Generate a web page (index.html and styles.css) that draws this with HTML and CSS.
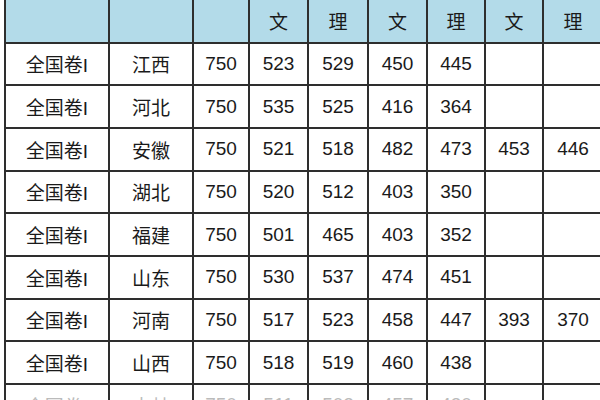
FILE: index.html
```html
<!DOCTYPE html>
<html lang="zh">
<head>
<meta charset="utf-8">
<link rel="stylesheet" href="styles.css">
</head>
<body>
<table class="score">
  <colgroup>
    <col class="c1"><col class="c2"><col class="c3"><col class="c4"><col class="c5"><col class="c6"><col class="c7"><col class="c8"><col class="c9">
  </colgroup>
  <thead>
    <tr class="head"><th></th><th></th><th></th><th>文</th><th>理</th><th>文</th><th>理</th><th>文</th><th>理</th></tr>
  </thead>
  <tbody>
    <tr><td>全国卷I</td><td>江西</td><td>750</td><td>523</td><td>529</td><td>450</td><td>445</td><td></td><td></td></tr>
    <tr><td>全国卷I</td><td>河北</td><td>750</td><td>535</td><td>525</td><td>416</td><td>364</td><td></td><td></td></tr>
    <tr><td>全国卷I</td><td>安徽</td><td>750</td><td>521</td><td>518</td><td>482</td><td>473</td><td>453</td><td>446</td></tr>
    <tr><td>全国卷I</td><td>湖北</td><td>750</td><td>520</td><td>512</td><td>403</td><td>350</td><td></td><td></td></tr>
    <tr><td>全国卷I</td><td>福建</td><td>750</td><td>501</td><td>465</td><td>403</td><td>352</td><td></td><td></td></tr>
    <tr><td>全国卷I</td><td>山东</td><td>750</td><td>530</td><td>537</td><td>474</td><td>451</td><td></td><td></td></tr>
    <tr><td>全国卷I</td><td>河南</td><td>750</td><td>517</td><td>523</td><td>458</td><td>447</td><td>393</td><td>370</td></tr>
    <tr><td>全国卷I</td><td>山西</td><td>750</td><td>518</td><td>519</td><td>460</td><td>438</td><td></td><td></td></tr>
    <tr class="faded"><td>全国卷I</td><td>吉林</td><td>750</td><td>511</td><td>502</td><td>457</td><td>430</td><td></td><td></td></tr>
  </tbody>
</table>
</body>
</html>
```
FILE: styles.css
```css
html, body {
  margin: 0;
  padding: 0;
  background: #ffffff;
  overflow: hidden;
}
.score {
  border-collapse: collapse;
  table-layout: fixed;
  width: 598px;
  margin-left: 4px;
  margin-top: -1px;
  font-family: "Liberation Sans", "Noto Sans CJK SC", sans-serif;
  font-size: 19px;
  color: #1a1a1a;
}
.c1 { width: 104px; }
.c2 { width: 84px; }
.c3 { width: 56px; }
.c4 { width: 59px; }
.c5 { width: 60px; }
.c6 { width: 59px; }
.c7 { width: 58px; }
.c8 { width: 58px; }
.c9 { width: 60px; }
.score th, .score td {
  border: 2px solid #2e2e2e;
  text-align: center;
  padding: 0;
  font-weight: normal;
}
.score tr { height: 42.7px; }
.score .head { height: 43.5px; }
.head th {
  background: #b3dbe9;
  border-top: none;
}
.faded td { color: #bbbbbb; }
```
